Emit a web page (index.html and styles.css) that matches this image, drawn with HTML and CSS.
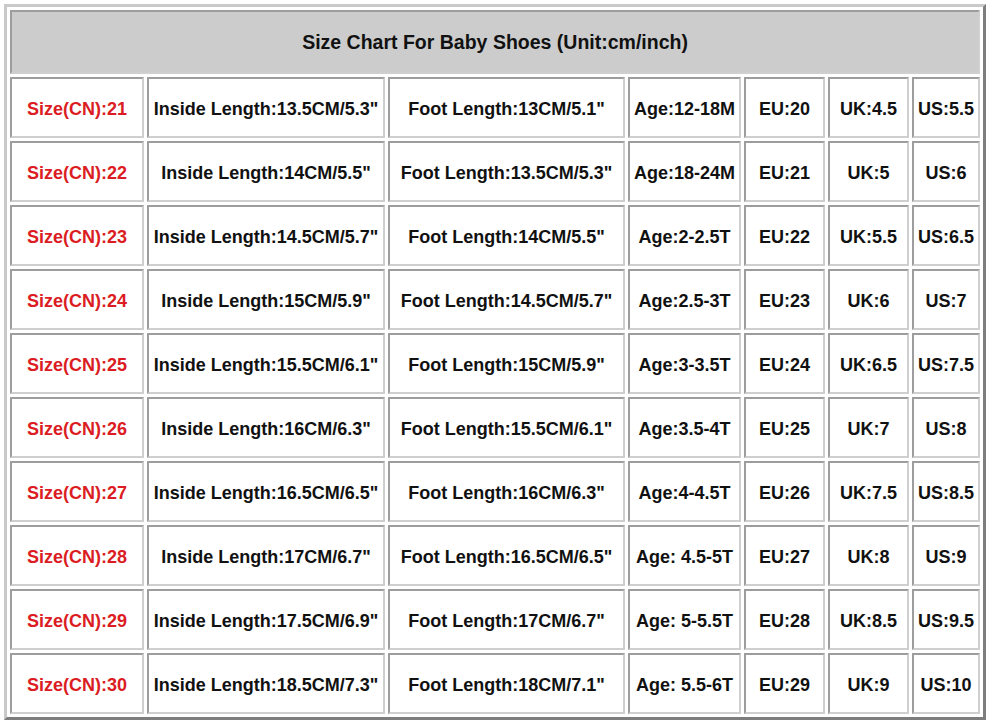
FILE: index.html
```html
<!DOCTYPE html>
<html>
<head>
<meta charset="utf-8">
<link rel="stylesheet" href="styles.css">
</head>
<body>
<table class="chart">
  <colgroup>
    <col class="c1"><col class="c2"><col class="c3"><col class="c4"><col class="c5"><col class="c6"><col class="c7">
  </colgroup>
  <tr class="head"><td colspan="7">Size Chart For Baby Shoes (Unit:cm/inch)</td></tr>
  <tr><td class="size">Size(CN):21</td><td>Inside Length:13.5CM/5.3"</td><td>Foot Length:13CM/5.1"</td><td>Age:12-18M</td><td>EU:20</td><td>UK:4.5</td><td>US:5.5</td></tr>
  <tr><td class="size">Size(CN):22</td><td>Inside Length:14CM/5.5"</td><td>Foot Length:13.5CM/5.3"</td><td>Age:18-24M</td><td>EU:21</td><td>UK:5</td><td>US:6</td></tr>
  <tr><td class="size">Size(CN):23</td><td>Inside Length:14.5CM/5.7"</td><td>Foot Length:14CM/5.5"</td><td>Age:2-2.5T</td><td>EU:22</td><td>UK:5.5</td><td>US:6.5</td></tr>
  <tr><td class="size">Size(CN):24</td><td>Inside Length:15CM/5.9"</td><td>Foot Length:14.5CM/5.7"</td><td>Age:2.5-3T</td><td>EU:23</td><td>UK:6</td><td>US:7</td></tr>
  <tr><td class="size">Size(CN):25</td><td>Inside Length:15.5CM/6.1"</td><td>Foot Length:15CM/5.9"</td><td>Age:3-3.5T</td><td>EU:24</td><td>UK:6.5</td><td>US:7.5</td></tr>
  <tr><td class="size">Size(CN):26</td><td>Inside Length:16CM/6.3"</td><td>Foot Length:15.5CM/6.1"</td><td>Age:3.5-4T</td><td>EU:25</td><td>UK:7</td><td>US:8</td></tr>
  <tr><td class="size">Size(CN):27</td><td>Inside Length:16.5CM/6.5"</td><td>Foot Length:16CM/6.3"</td><td>Age:4-4.5T</td><td>EU:26</td><td>UK:7.5</td><td>US:8.5</td></tr>
  <tr><td class="size">Size(CN):28</td><td>Inside Length:17CM/6.7"</td><td>Foot Length:16.5CM/6.5"</td><td>Age: 4.5-5T</td><td>EU:27</td><td>UK:8</td><td>US:9</td></tr>
  <tr><td class="size">Size(CN):29</td><td>Inside Length:17.5CM/6.9"</td><td>Foot Length:17CM/6.7"</td><td>Age: 5-5.5T</td><td>EU:28</td><td>UK:8.5</td><td>US:9.5</td></tr>
  <tr><td class="size">Size(CN):30</td><td>Inside Length:18.5CM/7.3"</td><td>Foot Length:18CM/7.1"</td><td>Age: 5.5-6T</td><td>EU:29</td><td>UK:9</td><td>US:10</td></tr>
</table>
</body>
</html>
```

FILE: styles.css
```css
html, body {
  margin: 0;
  padding: 0;
  background: #ffffff;
}
body {
  padding: 4px;
  font-family: "Liberation Sans", Arial, sans-serif;
}
.chart {
  table-layout: fixed;
  width: 982px;
  border-collapse: separate;
  border-spacing: 3px;
  border-style: solid;
  border-width: 3px;
  border-color: #c9c9c9 #7d7d7d #7d7d7d #c9c9c9;
  background: #ffffff;
}
.c1 { width: 134px; }
.c2 { width: 238px; }
.c3 { width: 237px; }
.c4 { width: 113px; }
.c5 { width: 81px; }
.c6 { width: 81px; }
.c7 { width: 68px; }
.chart td {
  box-sizing: border-box;
  height: 61px;
  padding: 4px 0 0 0;
  text-align: center;
  vertical-align: middle;
  font-size: 18px;
  font-weight: bold;
  color: #111111;
  white-space: nowrap;
  border-style: solid;
  border-width: 2px;
  border-color: #9d9d9d #cfcfcf #cfcfcf #9d9d9d;
}
.chart .head td {
  height: 64px;
  padding: 0;
  background: #cccccc;
  font-size: 19.5px;
}
.chart td.size {
  color: #dc1c23;
}
```
